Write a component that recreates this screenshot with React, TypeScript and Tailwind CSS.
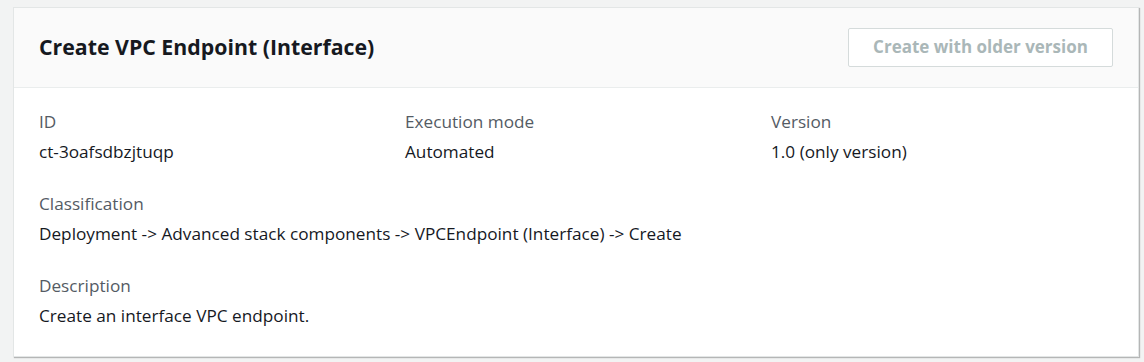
import React from 'react';

const font = { fontFamily: "'Open Sans', 'Noto Sans', Arial, sans-serif" };

function Field({ label, value }: { label: string; value: string }) {
  return (
    <div className="flex flex-col gap-2">
      <div className="text-[17.2px] leading-[22px] text-[#545b64]">{label}</div>
      <div className="text-[17.2px] leading-[22px] text-[#16191f]">{value}</div>
    </div>
  );
}

export default function App() {
  return (
    <div className="w-[1144px] h-[362px] bg-[#f2f3f3] pt-[7px] pl-[13px]" style={font}>
      <div className="w-[1126px] bg-white border border-[#e3e6e6] shadow-[1px_1px_1px_rgba(0,0,0,0.25)]">
        {/* Header */}
        <div className="h-[80px] bg-[#fafafa] border-b border-[#eaeded] flex items-center justify-between pl-[25px] pr-[25px]">
          <h2 className="text-[21.3px] font-bold text-[#16191f] mt-[-1px]">Create VPC Endpoint (Interface)</h2>
          <button
            disabled
            className="w-[265px] h-[39px] mt-[-1px] border border-[#d5dbdb] bg-white text-[#aab7b8] text-[17px] font-bold rounded-[2px]"
          >
            Create with older version
          </button>
        </div>

        {/* Body */}
        <div className="pl-[25px] pr-[25px] pt-[23px] pb-[29px] flex flex-col gap-[30px]">
          <div className="grid grid-cols-3 gap-x-[24px]">
            <Field label="ID" value="ct-3oafsdbzjtuqp" />
            <Field label="Execution mode" value="Automated" />
            <Field label="Version" value="1.0 (only version)" />
          </div>
          <Field label="Classification" value="Deployment -> Advanced stack components -> VPCEndpoint (Interface) -> Create" />
          <Field label="Description" value="Create an interface VPC endpoint." />
        </div>
      </div>
    </div>
  );
}
